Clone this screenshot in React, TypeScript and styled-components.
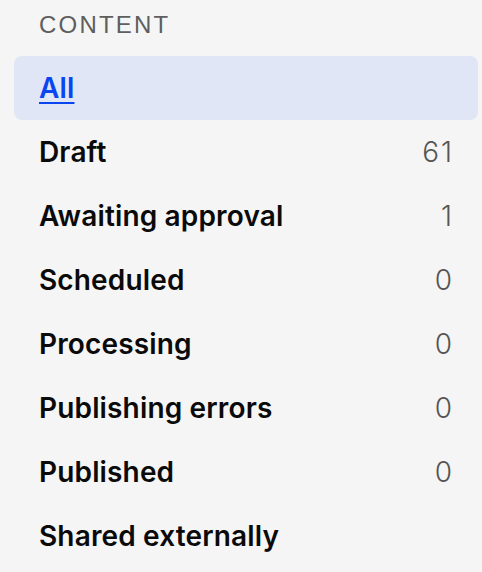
import styled, { createGlobalStyle } from 'styled-components'

const GlobalStyle = createGlobalStyle`
  html, body {
    margin: 0;
    padding: 0;
    background: #f5f5f5;
  }
  body {
    font-family: Inter, "Noto Sans", sans-serif;
    -webkit-font-smoothing: antialiased;
  }
`

const Sidebar = styled.nav`
  display: flex;
  flex-direction: column;
  width: 482px;
  height: 572px;
  padding: 0 4px 0 14px;
  box-sizing: border-box;
  overflow: hidden;
  background: #f5f5f5;
`

const SectionTitle = styled.div`
  height: 56px;
  padding: 13px 0 0 25px;
  box-sizing: border-box;
  font-family: "Liberation Sans", Arial, sans-serif;
  font-size: 24px;
  line-height: 24px;
  letter-spacing: 2.2px;
  color: #5e5e5e;
`

const List = styled.ul`
  list-style: none;
  margin: 0;
  padding: 0;
  display: flex;
  flex-direction: column;
`

const Row = styled.li<{ $active?: boolean }>`
  display: flex;
  align-items: center;
  justify-content: space-between;
  height: 64px;
  padding: 0 26px 0 25px;
  border-radius: 8px;
  background: ${({ $active }) => ($active ? '#e0e6f5' : 'transparent')};
`

const Label = styled.a<{ $active?: boolean }>`
  font-size: 28px;
  font-weight: 600;
  letter-spacing: 0.15px;
  color: ${({ $active }) => ($active ? '#0a45f2' : '#0a0a0a')};
  text-decoration: ${({ $active }) => ($active ? 'underline' : 'none')};
  text-decoration-thickness: 2px;
  text-underline-offset: 4px;
  cursor: pointer;
`

const Count = styled.span`
  font-size: 28px;
  font-weight: 300;
  letter-spacing: 2px;
  margin-right: -2px;
  color: #555555;
`

const items: { label: string; count?: number }[] = [
  { label: 'All' },
  { label: 'Draft', count: 61 },
  { label: 'Awaiting approval', count: 1 },
  { label: 'Scheduled', count: 0 },
  { label: 'Processing', count: 0 },
  { label: 'Publishing errors', count: 0 },
  { label: 'Published', count: 0 },
  { label: 'Shared externally' },
]

const App = () => {
  return (
    <>
      <GlobalStyle />
      <Sidebar>
        <SectionTitle>CONTENT</SectionTitle>
        <List>
          {items.map((item, i) => (
            <Row key={item.label} $active={i === 0}>
              <Label $active={i === 0}>{item.label}</Label>
              {item.count !== undefined && <Count>{item.count}</Count>}
            </Row>
          ))}
        </List>
      </Sidebar>
    </>
  )
}

export default App
